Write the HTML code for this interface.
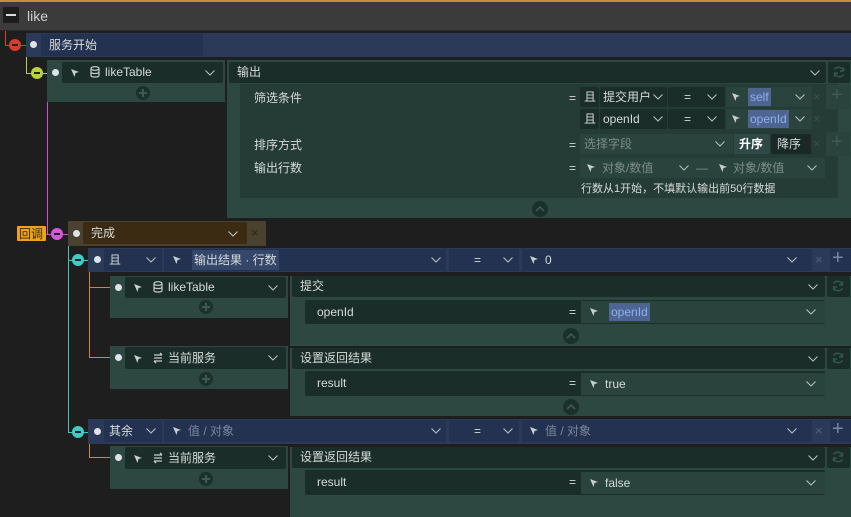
<!DOCTYPE html>
<html><head><meta charset="utf-8"><style>
*{box-sizing:border-box;margin:0;padding:0}
body{width:851px;height:517px;background:#1f1e1f;position:relative;overflow:hidden;font-family:"Liberation Sans","Noto Sans CJK SC",sans-serif;font-size:12px;color:#d6dbd8}
.a{position:absolute}
.t{position:absolute;white-space:nowrap;line-height:20px}
.g{background:#2d4741}
.in{background:#1b2d29;border-radius:2px}
.lt{background:#2a423c}
.bl{background:#2b3a58}
.bli{background:#243252}
.dot{position:absolute;width:7px;height:7px;border-radius:50%;background:#dfe3ea}
.c{position:absolute;width:12px;height:12px;border-radius:50%}
.c:after{content:"";position:absolute;left:3px;top:5px;width:6px;height:2px;background:#222}
.chev{position:absolute;width:12px;height:8px}
.pl{position:absolute;width:14px;height:14px;border-radius:50%;background:#1c302c}
.pl:before{content:"";position:absolute;left:3px;top:6px;width:8px;height:2px;background:#3e5a54}
.pl:after{content:"";position:absolute;left:6px;top:3px;width:2px;height:8px;background:#3e5a54}
.up{position:absolute;width:16px;height:16px;border-radius:50%;background:#1b2f2b}
.hl{background:#4d6590;color:#8fb0f0;padding:0 2px}
.gr{color:#7e8c88}
.x{position:absolute;color:#3d504b;font-size:13px;line-height:20px}
</style></head><body>
<svg width="0" height="0" style="position:absolute"><defs>
<symbol id="cv" viewBox="0 0 12 8"><polyline points="1.5,1.5 6,6 10.5,1.5" fill="none" stroke="#b8c0bd" stroke-width="1.1"/></symbol>
<symbol id="uc" viewBox="0 0 12 8"><polyline points="2,6 6,2 10,6" fill="none" stroke="#3e5a54" stroke-width="1.6"/></symbol>
<symbol id="ar" viewBox="0 0 10 10"><path d="M1 1 L9 4 L5.5 5 L4.5 9 Z" fill="#c8cfcc"/></symbol>
<symbol id="db" viewBox="0 0 10 12"><ellipse cx="5" cy="2.5" rx="4" ry="1.8" fill="none" stroke="#c8cfcc" stroke-width="1.2"/><path d="M1 2.5 V9.5 C1 11.5 9 11.5 9 9.5 V2.5 M1 6 C1 8 9 8 9 6" fill="none" stroke="#c8cfcc" stroke-width="1.2"/></symbol>
<symbol id="sw" viewBox="0 0 10 12"><path d="M1 3 H9 M7 1 L9 3 M1 6 H9 M9 9 H1 M3 11 L1 9" fill="none" stroke="#c8cfcc" stroke-width="1.3"/></symbol>
<symbol id="rf" viewBox="0 0 14 14"><path d="M11.5 6 A5 5 0 0 0 2.5 4.5 M2.5 8 A5 5 0 0 0 11.5 9.5 M11.5 2.5 V6 H8 M2.5 11.5 V8 H6" fill="none" stroke="#33574d" stroke-width="1.4"/></symbol>
</defs></svg>

<!-- header -->
<div class="a" style="left:0;top:0;width:851px;height:2px;background:#c98f2c"></div>
<div class="a" style="left:0;top:2px;width:851px;height:29px;background:#3b3b3b;border-bottom:1px solid #2a2a2a"></div>
<div class="a" style="left:3px;top:7px;width:16px;height:16px;background:#1d1d1d"></div>
<div class="a" style="left:6px;top:14px;width:10px;height:2px;background:#ddd"></div>
<div class="t" style="left:27px;top:6px;font-size:14px;color:#d0d0d0">like</div>

<!-- tree lines -->
<div class="a" style="left:5px;top:31px;width:1px;height:15px;background:#e03a30"></div>
<div class="a" style="left:5px;top:45px;width:22px;height:1px;background:#e03a30"></div>
<div class="a" style="left:26px;top:57px;width:1px;height:16px;background:#b8d23a"></div>
<div class="a" style="left:26px;top:73px;width:22px;height:1px;background:#b8d23a"></div>
<div class="a" style="left:47px;top:102px;width:1px;height:132px;background:#d050d0"></div>
<div class="a" style="left:46px;top:234px;width:22px;height:1px;background:#d050d0"></div>
<div class="a" style="left:68px;top:246px;width:1px;height:187px;background:#40c8c0"></div>
<div class="a" style="left:68px;top:260px;width:20px;height:1px;background:#40c8c0"></div>
<div class="a" style="left:68px;top:432px;width:20px;height:1px;background:#40c8c0"></div>
<div class="a" style="left:89px;top:272px;width:1px;height:86px;background:#d08838"></div>
<div class="a" style="left:89px;top:287px;width:21px;height:1px;background:#d08838"></div>
<div class="a" style="left:89px;top:357px;width:21px;height:1px;background:#d08838"></div>
<div class="a" style="left:89px;top:444px;width:1px;height:14px;background:#d08838"></div>
<div class="a" style="left:89px;top:457px;width:21px;height:1px;background:#d08838"></div>

<!-- 服务开始 -->
<div class="a bl" style="left:26px;top:33px;width:825px;height:24px"></div>
<div class="a bli" style="left:41px;top:34px;width:162px;height:22px;border-radius:2px"></div>
<div class="dot" style="left:30px;top:41px"></div>
<div class="t" style="left:49px;top:35px">服务开始</div>
<div class="c" style="left:9px;top:39px;background:#e2372f"></div>

<!-- likeTable node 1 -->
<div class="a g" style="left:47px;top:60px;width:178px;height:42px"></div>
<div class="a in" style="left:62px;top:62px;width:161px;height:21px"></div>
<div class="dot" style="left:52px;top:69px"></div>
<svg class="a" style="left:70px;top:68px" width="10" height="10"><use href="#ar"/></svg>
<svg class="a" style="left:90px;top:66px" width="10" height="12"><use href="#db"/></svg>
<div class="t" style="left:105px;top:62px">likeTable</div>
<svg class="chev" style="left:204px;top:69px"><use href="#cv"/></svg>
<div class="pl" style="left:136px;top:86px"></div>
<div class="c" style="left:31px;top:67px;background:#b7d33b"></div>

<!-- 输出 panel -->
<div class="a g" style="left:227px;top:60px;width:624px;height:158px"></div>
<div class="a in" style="left:229px;top:62px;width:597px;height:21px"></div>
<div class="t" style="left:237px;top:62px">输出</div>
<svg class="chev" style="left:809px;top:69px"><use href="#cv"/></svg>
<div class="a in" style="left:828px;top:62px;width:22px;height:21px"></div>
<svg class="a" style="left:832px;top:65px" width="14" height="14"><use href="#rf"/></svg>
<div class="a lt" style="left:240px;top:84px;width:598px;height:114px;background:#253b36"></div>
<div class="t" style="left:254px;top:88px">筛选条件</div>
<div class="t" style="left:254px;top:135px">排序方式</div>
<div class="t" style="left:254px;top:158px">输出行数</div>
<div class="t" style="left:569px;top:88px">=</div>
<div class="t" style="left:569px;top:135px">=</div>
<div class="t" style="left:569px;top:158px">=</div>
<!-- filter row1 -->
<div class="a in" style="left:580px;top:87px;width:19px;height:20px"></div><div class="t" style="left:584px;top:87px">且</div>
<div class="a in" style="left:600px;top:87px;width:67px;height:20px"></div><div class="t" style="left:603px;top:87px">提交用户</div>
<svg class="chev" style="left:652px;top:93px"><use href="#cv"/></svg>
<div class="a in" style="left:668px;top:87px;width:57px;height:20px"></div><div class="t" style="left:684px;top:87px">=</div>
<svg class="chev" style="left:706px;top:93px"><use href="#cv"/></svg>
<div class="a" style="left:726px;top:87px;width:86px;height:20px;background:#2a433d"></div>
<svg class="a" style="left:731px;top:92px" width="10" height="10"><use href="#ar"/></svg>
<div class="t hl" style="left:748px;top:88px;line-height:18px">self</div>
<svg class="chev" style="left:794px;top:93px"><use href="#cv"/></svg>
<div class="x" style="left:813px;top:87px">×</div>
<div class="a" style="left:826px;top:85px;width:24px;height:24px;background:#2a433d"></div>
<div class="t" style="left:831px;top:85px;font-size:20px;color:#3f5b55">+</div>
<!-- filter row2 -->
<div class="a in" style="left:580px;top:109px;width:19px;height:20px"></div><div class="t" style="left:584px;top:109px">且</div>
<div class="a in" style="left:600px;top:109px;width:67px;height:20px"></div><div class="t" style="left:603px;top:109px">openId</div>
<svg class="chev" style="left:652px;top:115px"><use href="#cv"/></svg>
<div class="a in" style="left:668px;top:109px;width:57px;height:20px"></div><div class="t" style="left:684px;top:109px">=</div>
<svg class="chev" style="left:706px;top:115px"><use href="#cv"/></svg>
<div class="a" style="left:726px;top:109px;width:86px;height:20px;background:#2a433d"></div>
<svg class="a" style="left:731px;top:114px" width="10" height="10"><use href="#ar"/></svg>
<div class="t hl" style="left:748px;top:110px;line-height:18px">openId</div>
<svg class="chev" style="left:794px;top:115px"><use href="#cv"/></svg>
<div class="x" style="left:813px;top:109px">×</div>
<!-- sort -->
<div class="a" style="left:580px;top:134px;width:153px;height:20px;background:#2a433d"></div>
<div class="t gr" style="left:584px;top:134px">选择字段</div>
<svg class="chev" style="left:714px;top:140px"><use href="#cv"/></svg>
<div class="a" style="left:734px;top:134px;width:36px;height:20px;background:#2f4a46"></div><div class="t" style="left:739px;top:134px;color:#fff;font-weight:bold">升序</div>
<div class="a" style="left:771px;top:134px;width:40px;height:20px;background:#1a2826"></div><div class="t" style="left:777px;top:134px">降序</div>
<div class="x" style="left:813px;top:134px">×</div>
<div class="a" style="left:826px;top:132px;width:24px;height:24px;background:#2a433d"></div>
<div class="t" style="left:831px;top:132px;font-size:20px;color:#3f5b55">+</div>
<!-- rows -->
<div class="a" style="left:580px;top:158px;width:245px;height:20px;background:#2a433d"></div>
<svg class="a" style="left:586px;top:163px" width="10" height="10"><use href="#ar"/></svg>
<div class="t gr" style="left:602px;top:158px">对象/数值</div>
<svg class="chev" style="left:678px;top:164px"><use href="#cv"/></svg>
<div class="t gr" style="left:696px;top:158px">—</div>
<svg class="a" style="left:718px;top:163px" width="10" height="10"><use href="#ar"/></svg>
<div class="t gr" style="left:733px;top:158px">对象/数值</div>
<svg class="chev" style="left:806px;top:164px"><use href="#cv"/></svg>
<div class="t" style="left:581px;top:179px;font-size:11px">行数从1开始，不填默认输出前50行数据</div>
<div class="up" style="left:532px;top:201px"></div>
<svg class="chev" style="left:534px;top:205px"><use href="#uc"/></svg>

<!-- 回调 -->
<div class="a" style="left:17px;top:226px;width:29px;height:15px;background:#efa31a;border-radius:1px"></div>
<div class="t" style="left:19px;top:224px;color:#3a2a10">回调</div>
<div class="c" style="left:51px;top:228px;background:#d558d6"></div>
<div class="a" style="left:68px;top:221px;width:198px;height:25px;background:#4b412f"></div>
<div class="a" style="left:83px;top:222px;width:164px;height:22px;background:#3a2b12;border-radius:2px"></div>
<div class="dot" style="left:73px;top:230px"></div>
<div class="t" style="left:91px;top:223px">完成</div>
<svg class="chev" style="left:227px;top:230px"><use href="#cv"/></svg>
<div class="x" style="left:251px;top:223px;color:#2a2418">×</div>

<!-- 且 row -->
<div class="a bl" style="left:88px;top:248px;width:763px;height:24px"></div>
<div class="dot" style="left:94px;top:256px"></div>
<div class="a bli" style="left:104px;top:249px;width:58px;height:22px"></div>
<div class="t" style="left:109px;top:250px">且</div>
<svg class="chev" style="left:145px;top:256px"><use href="#cv"/></svg>
<div class="a bli" style="left:164px;top:249px;width:282px;height:22px"></div>
<svg class="a" style="left:172px;top:255px" width="10" height="10"><use href="#ar"/></svg>
<div class="t" style="left:192px;top:250px;background:#34466a;padding:0 2px">输出结果 · 行数</div>
<svg class="chev" style="left:430px;top:256px"><use href="#cv"/></svg>
<div class="a bli" style="left:449px;top:249px;width:70px;height:22px"></div>
<div class="t" style="left:474px;top:250px">=</div>
<svg class="chev" style="left:502px;top:256px"><use href="#cv"/></svg>
<div class="a bli" style="left:522px;top:249px;width:290px;height:22px"></div>
<svg class="a" style="left:529px;top:255px" width="10" height="10"><use href="#ar"/></svg>
<div class="t" style="left:545px;top:250px">0</div>
<svg class="chev" style="left:786px;top:256px"><use href="#cv"/></svg>
<div class="x" style="left:815px;top:250px;color:#55607a">×</div>
<div class="a bli" style="left:830px;top:249px;width:21px;height:22px"></div>
<div class="t" style="left:832px;top:248px;font-size:20px;color:#7a88a8">+</div>
<div class="c" style="left:72px;top:254px;background:#41cbc4"></div>

<!-- likeTable 2 -->
<div class="a g" style="left:110px;top:276px;width:178px;height:42px"></div>
<div class="a in" style="left:125px;top:277px;width:161px;height:21px"></div>
<div class="dot" style="left:115px;top:284px"></div>
<svg class="a" style="left:133px;top:283px" width="10" height="10"><use href="#ar"/></svg>
<svg class="a" style="left:153px;top:281px" width="10" height="12"><use href="#db"/></svg>
<div class="t" style="left:168px;top:277px">likeTable</div>
<svg class="chev" style="left:267px;top:284px"><use href="#cv"/></svg>
<div class="pl" style="left:199px;top:300px"></div>

<div class="a g" style="left:290px;top:276px;width:561px;height:70px"></div>
<div class="a in" style="left:292px;top:276px;width:533px;height:21px"></div>
<div class="t" style="left:300px;top:276px">提交</div>
<svg class="chev" style="left:807px;top:283px"><use href="#cv"/></svg>
<div class="a in" style="left:827px;top:276px;width:23px;height:21px"></div>
<svg class="a" style="left:831px;top:279px" width="14" height="14"><use href="#rf"/></svg>
<div class="a in" style="left:305px;top:300px;width:520px;height:24px"></div>
<div class="t" style="left:317px;top:302px">openId</div>
<div class="t" style="left:569px;top:302px">=</div>
<div class="a" style="left:581px;top:301px;width:244px;height:22px;background:#2a433d"></div>
<svg class="a" style="left:589px;top:307px" width="10" height="10"><use href="#ar"/></svg>
<div class="t hl" style="left:609px;top:303px;line-height:18px">openId</div>
<svg class="chev" style="left:805px;top:308px"><use href="#cv"/></svg>
<div class="up" style="left:563px;top:328px"></div>
<svg class="chev" style="left:565px;top:332px"><use href="#uc"/></svg>

<!-- 当前服务 1 -->
<div class="a g" style="left:110px;top:346px;width:178px;height:43px"></div>
<div class="a in" style="left:125px;top:347px;width:161px;height:22px"></div>
<div class="dot" style="left:115px;top:354px"></div>
<svg class="a" style="left:133px;top:354px" width="10" height="10"><use href="#ar"/></svg>
<svg class="a" style="left:153px;top:352px" width="10" height="12"><use href="#sw"/></svg>
<div class="t" style="left:168px;top:348px">当前服务</div>
<svg class="chev" style="left:267px;top:354px"><use href="#cv"/></svg>
<div class="pl" style="left:199px;top:372px"></div>

<div class="a g" style="left:290px;top:348px;width:561px;height:68px"></div>
<div class="a in" style="left:292px;top:348px;width:533px;height:21px"></div>
<div class="t" style="left:300px;top:348px">设置返回结果</div>
<svg class="chev" style="left:807px;top:355px"><use href="#cv"/></svg>
<div class="a in" style="left:827px;top:348px;width:23px;height:21px"></div>
<svg class="a" style="left:831px;top:351px" width="14" height="14"><use href="#rf"/></svg>
<div class="a in" style="left:305px;top:371px;width:520px;height:25px"></div>
<div class="t" style="left:317px;top:373px">result</div>
<div class="t" style="left:569px;top:373px">=</div>
<div class="a" style="left:581px;top:373px;width:244px;height:22px;background:#2a433d"></div>
<svg class="a" style="left:589px;top:379px" width="10" height="10"><use href="#ar"/></svg>
<div class="t" style="left:605px;top:374px">true</div>
<svg class="chev" style="left:805px;top:380px"><use href="#cv"/></svg>
<div class="up" style="left:563px;top:399px"></div>
<svg class="chev" style="left:565px;top:403px"><use href="#uc"/></svg>

<!-- 其余 row -->
<div class="a bl" style="left:88px;top:419px;width:763px;height:25px"></div>
<div class="dot" style="left:94px;top:428px"></div>
<div class="a bli" style="left:104px;top:420px;width:58px;height:22px"></div>
<div class="t" style="left:109px;top:421px">其余</div>
<svg class="chev" style="left:145px;top:427px"><use href="#cv"/></svg>
<div class="a bli" style="left:164px;top:420px;width:282px;height:22px"></div>
<svg class="a" style="left:172px;top:426px" width="10" height="10"><use href="#ar"/></svg>
<div class="t gr" style="left:188px;top:421px;color:#7c869c">值 / 对象</div>
<svg class="chev" style="left:430px;top:427px"><use href="#cv"/></svg>
<div class="a bli" style="left:449px;top:420px;width:70px;height:22px"></div>
<div class="t" style="left:474px;top:421px">=</div>
<svg class="chev" style="left:502px;top:427px"><use href="#cv"/></svg>
<div class="a bli" style="left:522px;top:420px;width:290px;height:22px"></div>
<svg class="a" style="left:529px;top:426px" width="10" height="10"><use href="#ar"/></svg>
<div class="t" style="left:545px;top:421px;color:#7c869c">值 / 对象</div>
<svg class="chev" style="left:786px;top:427px"><use href="#cv"/></svg>
<div class="x" style="left:815px;top:421px;color:#55607a">×</div>
<div class="a bli" style="left:830px;top:420px;width:21px;height:22px"></div>
<div class="t" style="left:832px;top:419px;font-size:20px;color:#7a88a8">+</div>
<div class="c" style="left:72px;top:426px;background:#41cbc4"></div>

<!-- 当前服务 2 -->
<div class="a g" style="left:110px;top:446px;width:178px;height:43px"></div>
<div class="a in" style="left:125px;top:447px;width:161px;height:22px"></div>
<div class="dot" style="left:115px;top:454px"></div>
<svg class="a" style="left:133px;top:454px" width="10" height="10"><use href="#ar"/></svg>
<svg class="a" style="left:153px;top:452px" width="10" height="12"><use href="#sw"/></svg>
<div class="t" style="left:168px;top:448px">当前服务</div>
<svg class="chev" style="left:267px;top:454px"><use href="#cv"/></svg>
<div class="pl" style="left:199px;top:472px"></div>

<div class="a g" style="left:290px;top:447px;width:561px;height:70px"></div>
<div class="a in" style="left:292px;top:447px;width:533px;height:21px"></div>
<div class="t" style="left:300px;top:447px">设置返回结果</div>
<svg class="chev" style="left:807px;top:454px"><use href="#cv"/></svg>
<div class="a in" style="left:827px;top:447px;width:23px;height:21px"></div>
<svg class="a" style="left:831px;top:450px" width="14" height="14"><use href="#rf"/></svg>
<div class="a in" style="left:305px;top:470px;width:520px;height:25px"></div>
<div class="t" style="left:317px;top:472px">result</div>
<div class="t" style="left:569px;top:472px">=</div>
<div class="a" style="left:581px;top:472px;width:244px;height:22px;background:#2a433d"></div>
<svg class="a" style="left:589px;top:478px" width="10" height="10"><use href="#ar"/></svg>
<div class="t" style="left:605px;top:473px">false</div>
<svg class="chev" style="left:805px;top:479px"><use href="#cv"/></svg>
</body></html>
